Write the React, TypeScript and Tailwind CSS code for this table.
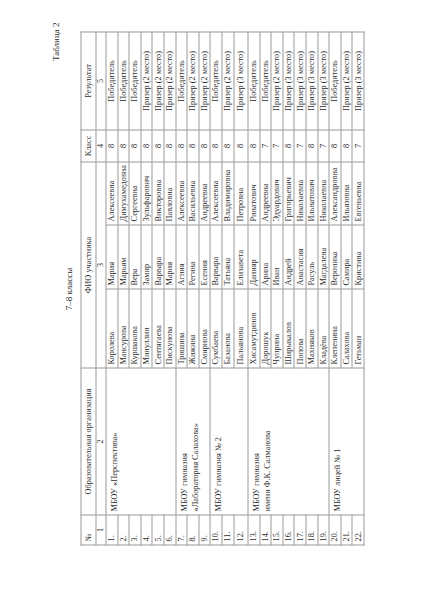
import React from 'react';

type Row = { n: number; last: string; first: string; mid: string; cls: number; res: string };

const rows: Row[] = [
  { n: 1, last: 'Королева', first: 'Мария', mid: 'Алексеевна', cls: 8, res: 'Победитель' },
  { n: 2, last: 'Мансурова', first: 'Марьям', mid: 'Димухамедовна', cls: 8, res: 'Победитель' },
  { n: 3, last: 'Куршакова', first: 'Вера', mid: 'Сергеевна', cls: 8, res: 'Победитель' },
  { n: 4, last: 'Минуллин', first: 'Замир', mid: 'Зульфарович', cls: 8, res: 'Призер (2 место)' },
  { n: 5, last: 'Сентягаева', first: 'Варвара', mid: 'Викторовна', cls: 8, res: 'Призер (2 место)' },
  { n: 6, last: 'Пискунова', first: 'Мария', mid: 'Павловна', cls: 8, res: 'Призер (2 место)' },
  { n: 7, last: 'Тришина', first: 'Агния', mid: 'Алексеевна', cls: 8, res: 'Победитель' },
  { n: 8, last: 'Жижина', first: 'Регина', mid: 'Васильевна', cls: 8, res: 'Призер (2 место)' },
  { n: 9, last: 'Смирнова', first: 'Есения', mid: 'Андреевна', cls: 8, res: 'Призер (2 место)' },
  { n: 10, last: 'Сумбаева', first: 'Варвара', mid: 'Алексеевна', cls: 8, res: 'Победитель' },
  { n: 11, last: 'Базанова', first: 'Татьяна', mid: 'Владимировна', cls: 8, res: 'Призер (2 место)' },
  { n: 12, last: 'Пальянова', first: 'Елизавета', mid: 'Петровна', cls: 8, res: 'Призер (3 место)' },
  { n: 13, last: 'Хисамутдинов', first: 'Данияр', mid: 'Ринатович', cls: 8, res: 'Победитель' },
  { n: 14, last: 'Дорошук', first: 'Арина', mid: 'Андреевна', cls: 7, res: 'Победитель' },
  { n: 15, last: 'Чуприна', first: 'Иван', mid: 'Эдуардович', cls: 7, res: 'Призер (2 место)' },
  { n: 16, last: 'Ширыкалов', first: 'Андрей', mid: 'Григорьевич', cls: 8, res: 'Призер (3 место)' },
  { n: 17, last: 'Попова', first: 'Анастасия', mid: 'Николаевна', cls: 7, res: 'Призер (3 место)' },
  { n: 18, last: 'Махняков', first: 'Расуль', mid: 'Ильнатович', cls: 8, res: 'Призер (3 место)' },
  { n: 19, last: 'Кладёва', first: 'Магдалена', mid: 'Николаевна', cls: 7, res: 'Призер (3 место)' },
  { n: 20, last: 'Клепенина', first: 'Вероника', mid: 'Александровна', cls: 8, res: 'Победитель' },
  { n: 21, last: 'Салахова', first: 'Самира', mid: 'Ильязовна', cls: 8, res: 'Призер (2 место)' },
  { n: 22, last: 'Гетьман', first: 'Кристина', mid: 'Евгеньевна', cls: 7, res: 'Призер (3 место)' },
];

// org cell starts at row n and spans the given number of rows
const orgs: Record<number, { span: number; lines: string[] }> = {
  1: { span: 6, lines: ['МБОУ «Перспектива»'] },
  7: { span: 3, lines: ['МБОУ гимназия', '«Лаборатория Салахова»'] },
  10: { span: 3, lines: ['МБОУ гимназия № 2'] },
  13: { span: 7, lines: ['МБОУ гимназия', 'имени Ф.К. Салманова'] },
  20: { span: 3, lines: ['МБОУ лицей № 1'] },
};

const cell = 'border border-[#9a9a9a] px-[3px] py-0 leading-none whitespace-nowrap overflow-hidden';

export default function App() {
  return (
    <div className="w-[424px] h-[599px] bg-white flex items-center justify-center overflow-hidden">
      <div className="w-[599px] h-[424px] shrink-0 -rotate-90 pl-[54px] pt-[50px] font-['Liberation_Serif',serif] text-[#2e2e2e]">
        <div className="w-[523px] text-right text-[9px] leading-[10px]">Таблица 2</div>
        <div className="w-[513px] mt-[3px] text-center text-[9px] leading-[10px]">7–8 классы</div>

        <table className="mt-[7px] w-[513px] table-fixed border-collapse text-[8.3px]">
          <colgroup>
            <col className="w-[30px]" />
            <col className="w-[147px]" />
            <col className="w-[79px]" />
            <col className="w-[64px]" />
            <col className="w-[63px]" />
            <col className="w-[32px]" />
            <col className="w-[98px]" />
          </colgroup>
          <thead>
            <tr className="h-[15px]">
              <th className={`${cell} font-normal text-left`}>№</th>
              <th className={`${cell} font-normal text-center`}>Образовательная организация</th>
              <th colSpan={3} className={`${cell} font-normal text-center`}>ФИО участника</th>
              <th className={`${cell} font-normal text-center`}>Класс</th>
              <th className={`${cell} font-normal text-center`}>Результат</th>
            </tr>
            <tr className="h-[10px]">
              <th className={`${cell} font-normal text-center`}>1</th>
              <th className={`${cell} font-normal text-center`}>2</th>
              <th colSpan={3} className={`${cell} font-normal text-center`}>3</th>
              <th className={`${cell} font-normal text-center`}>4</th>
              <th className={`${cell} font-normal text-center`}>5</th>
            </tr>
          </thead>
          <tbody>
            {rows.map((r) => {
              const org = orgs[r.n];
              return (
                <tr key={r.n} className={r.n === 12 ? 'h-[14.5px]' : 'h-[11.6px]'}>
                  <td className={cell}>{r.n}.</td>
                  {org && (
                    <td rowSpan={org.span} className={`${cell} align-top pt-[2px]`}>
                      {org.lines.map((l) => (
                        <div key={l} className="leading-[11px]">{l}</div>
                      ))}
                    </td>
                  )}
                  <td className={cell}>{r.last}</td>
                  <td className={cell}>{r.first}</td>
                  <td className={cell}>{r.mid}</td>
                  <td className={`${cell} text-center`}>{r.cls}</td>
                  <td className={`${cell} text-center`}>{r.res}</td>
                </tr>
              );
            })}
          </tbody>
        </table>
      </div>
    </div>
  );
}
